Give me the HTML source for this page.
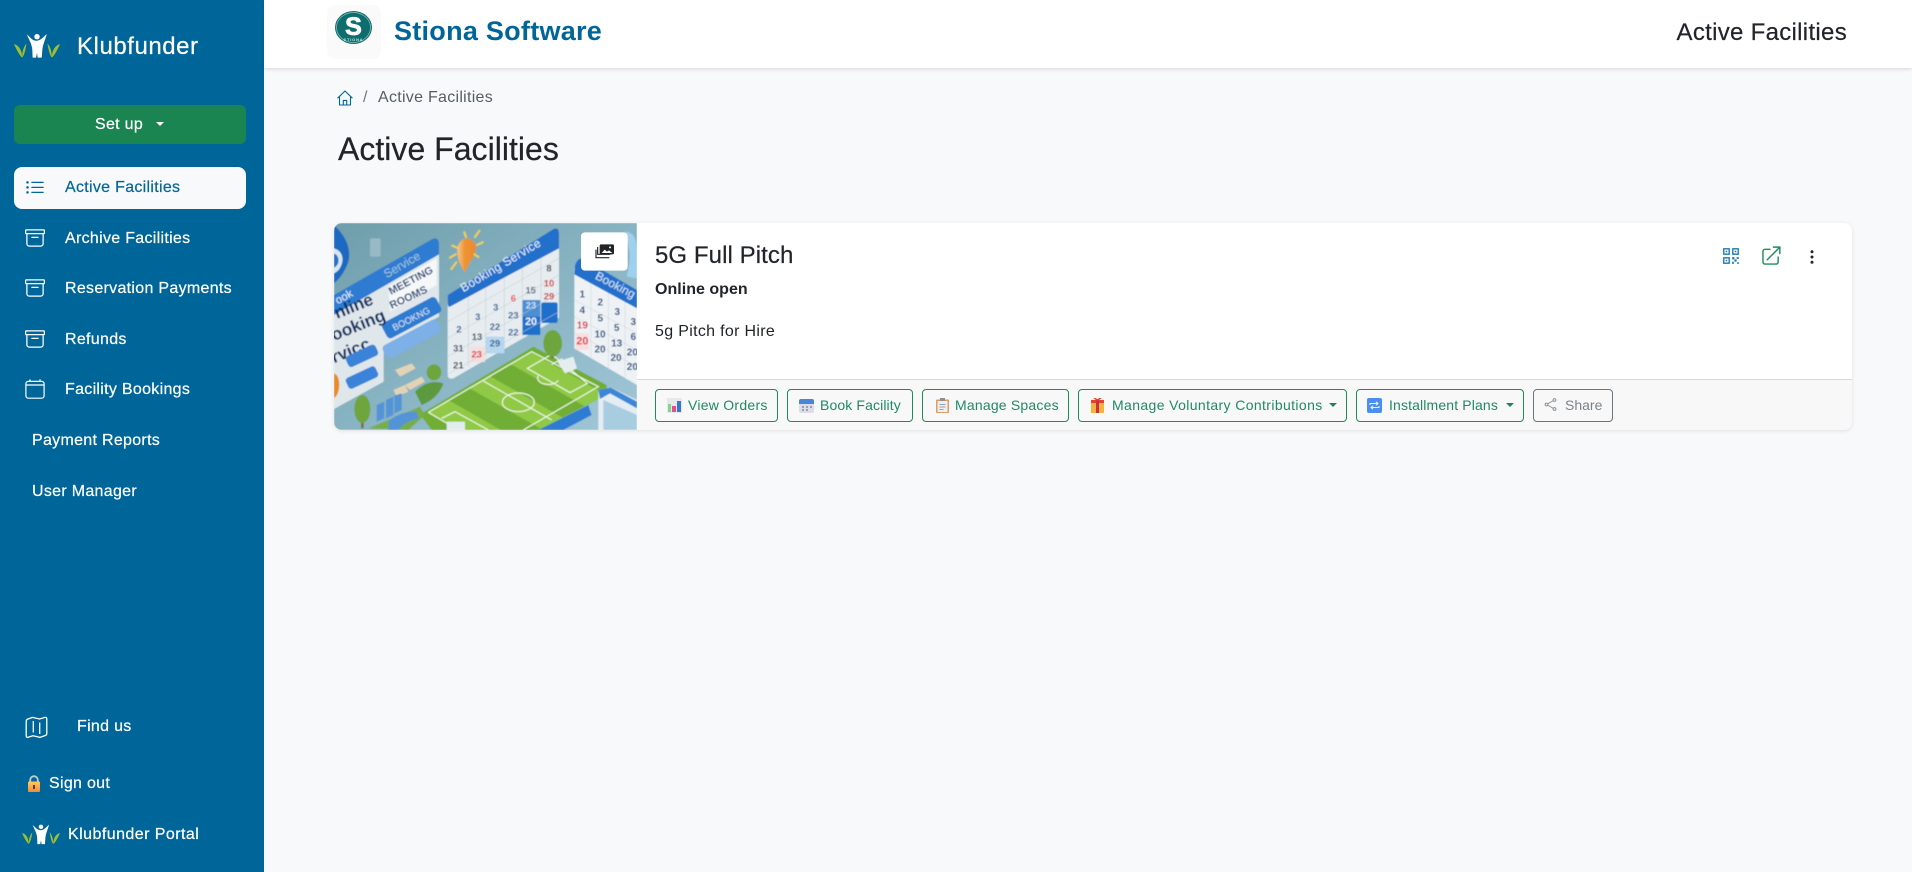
<!DOCTYPE html>
<html lang="en"><head><meta charset="utf-8"><title>Active Facilities</title>
<style>
*{box-sizing:border-box}
html,body{margin:0;padding:0;width:1912px;height:872px;overflow:hidden;background:#f8f9fa;font-family:"Liberation Sans",sans-serif;color:#212529}
.a{position:absolute;white-space:nowrap}
#side{position:absolute;left:0;top:0;width:264px;height:872px;background:#006699}
.m{position:absolute;color:#fff;font-size:16px;letter-spacing:.3px;line-height:20px;white-space:nowrap;-webkit-text-stroke:.2px currentColor}
.i{position:absolute;fill:#fff}
#top{position:absolute;left:264px;top:0;width:1648px;height:68px;background:#fff;box-shadow:0 1px 4px rgba(0,0,0,.14)}
#card{position:absolute;left:334px;top:223px;width:1518px;height:207px;background:#fff;border-radius:8px;box-shadow:0 1px 4px rgba(0,0,0,.1)}
#foot{position:absolute;left:303px;top:156px;width:1215px;height:51px;background:#f8f8f8;border-top:1px solid #d8d8d8;border-radius:0 0 8px 0}
.b{position:absolute;top:389px;height:33px;border:1px solid #1f8a5b;border-radius:4px;color:#1f8a66;font-size:14px;letter-spacing:.26px;line-height:31px;white-space:nowrap}
.b svg{position:absolute;left:11px;top:8px}
.b span{position:absolute;top:0}
.c{position:absolute;top:13px;width:0;height:0;border-left:4px solid transparent;border-right:4px solid transparent;border-top:4.5px solid #198754}
</style></head><body>
<div id="side">
<svg class="a" style="left:14px;top:33px" width="46" height="26" viewBox="42 100 136 75"><g fill="#9dbf35"><path d="M42 132C55 135 66 148 66 172C59 166 50 150 42 132Z"/><path d="M79 130C72 138 66 150 66 172C72 165 76 150 79 130Z"/><path d="M178 132C165 135 154 148 154 172C161 166 170 150 178 132Z"/><path d="M141 130C148 138 154 150 154 172C148 165 144 150 141 130Z"/></g><circle cx="110" cy="110" r="8" fill="#fff"/><path d="M80 103C90 112 97 122 108 122C120 122 128 112 139 102C134 120 128 132 126 146L124 172H112L110 158L107 172H97L96 146C94 130 86 118 80 103Z" fill="#fff"/></svg>
<div class="m" style="left:77px;top:33px;font-size:24px;line-height:27px;letter-spacing:.55px">Klubfunder</div>
<div class="a" style="left:14px;top:105px;width:232px;height:39px;background:#1b8551;border-radius:6px"></div>
<div class="m" style="left:95px;top:115px">Set up</div>
<div class="a" style="left:156px;top:122px;width:0;height:0;border-left:4.5px solid transparent;border-right:4.5px solid transparent;border-top:4.5px solid #fff"></div>
<div class="a" style="left:14px;top:167px;width:232px;height:42px;background:#f8f9fa;border-radius:8px"></div>
<svg class="i" style="left:25px;top:178px;fill:#006699" width="20" height="20" viewBox="0 0 16 16"><path fill-rule="evenodd" d="M5 11.5a.5.5 0 0 1 .5-.5h9a.5.5 0 0 1 0 1h-9a.5.5 0 0 1-.5-.5m0-4a.5.5 0 0 1 .5-.5h9a.5.5 0 0 1 0 1h-9a.5.5 0 0 1-.5-.5m0-4a.5.5 0 0 1 .5-.5h9a.5.5 0 0 1 0 1h-9a.5.5 0 0 1-.5-.5m-3 1a1 1 0 1 0 0-2 1 1 0 0 0 0 2m0 4a1 1 0 1 0 0-2 1 1 0 0 0 0 2m0 4a1 1 0 1 0 0-2 1 1 0 0 0 0 2"/></svg>
<div class="m" style="left:65px;top:178px;color:#006699">Active Facilities</div>
<svg class="i" style="left:25px;top:228px" width="20" height="20" viewBox="0 0 16 16"><path fill-rule="evenodd" d="M0 2a1 1 0 0 1 1-1h14a1 1 0 0 1 1 1v2a1 1 0 0 1-1 1v7.5a2.5 2.5 0 0 1-2.5 2.5h-9A2.5 2.5 0 0 1 1 12.5V5a1 1 0 0 1-1-1zm2 3v7.5A1.5 1.5 0 0 0 3.5 14h9a1.5 1.5 0 0 0 1.5-1.5V5zm13-3H1v2h14zM5 7.5a.5.5 0 0 1 .5-.5h5a.5.5 0 0 1 0 1h-5a.5.5 0 0 1-.5-.5"/></svg>
<div class="m" style="left:65px;top:229px">Archive Facilities</div>
<svg class="i" style="left:25px;top:278px" width="20" height="20" viewBox="0 0 16 16"><path fill-rule="evenodd" d="M0 2a1 1 0 0 1 1-1h14a1 1 0 0 1 1 1v2a1 1 0 0 1-1 1v7.5a2.5 2.5 0 0 1-2.5 2.5h-9A2.5 2.5 0 0 1 1 12.5V5a1 1 0 0 1-1-1zm2 3v7.5A1.5 1.5 0 0 0 3.5 14h9a1.5 1.5 0 0 0 1.5-1.5V5zm13-3H1v2h14zM5 7.5a.5.5 0 0 1 .5-.5h5a.5.5 0 0 1 0 1h-5a.5.5 0 0 1-.5-.5"/></svg>
<div class="m" style="left:65px;top:279px">Reservation Payments</div>
<svg class="i" style="left:25px;top:329px" width="20" height="20" viewBox="0 0 16 16"><path fill-rule="evenodd" d="M0 2a1 1 0 0 1 1-1h14a1 1 0 0 1 1 1v2a1 1 0 0 1-1 1v7.5a2.5 2.5 0 0 1-2.5 2.5h-9A2.5 2.5 0 0 1 1 12.5V5a1 1 0 0 1-1-1zm2 3v7.5A1.5 1.5 0 0 0 3.5 14h9a1.5 1.5 0 0 0 1.5-1.5V5zm13-3H1v2h14zM5 7.5a.5.5 0 0 1 .5-.5h5a.5.5 0 0 1 0 1h-5a.5.5 0 0 1-.5-.5"/></svg>
<div class="m" style="left:65px;top:330px">Refunds</div>
<svg class="i" style="left:25px;top:379px;fill:none;stroke:#fff" width="20" height="20" viewBox="0 0 20 20" stroke-width="1.2"><rect x=".9" y="2.4" width="18.2" height="16.8" rx="2.4"/><path d="M1 6h18M5 .4v2M15 .4v2" /></svg>
<div class="m" style="left:65px;top:380px">Facility Bookings</div>
<div class="m" style="left:32px;top:431px">Payment Reports</div>
<div class="m" style="left:32px;top:482px">User Manager</div>
<svg class="i" style="left:25px;top:716px;fill:none;stroke:#fff" width="23" height="23" viewBox="0 0 23 23" stroke-width="1.3" stroke-linejoin="round"><path d="M1.2 5.5Q1.2 3.5 3 3L7.5 1.4 14.500 3 20 1.400Q21.800 1.200 21.800 3V17.500Q21.800 19 20.300 19.500L15 21.400 8 19.700 3 21.300Q1.200 21.600 1.200 20Z"/><path d="M8.300 5V16.500M14.700 6.500V18"/></svg>
<div class="m" style="left:77px;top:717px">Find us</div>
<svg class="a" style="left:27px;top:775px" width="14" height="17" viewBox="0 0 14 17"><defs><linearGradient id="lk" x1="0" y1="0" x2="0" y2="1"><stop offset="0" stop-color="#ffc95a"/><stop offset="1" stop-color="#f58a3c"/></linearGradient></defs><path d="M3.200 8V5a3.800 3.800 0 0 1 7.600 0v3" fill="none" stroke="#c5c8cc" stroke-width="1.800"/><rect x="1" y="6.500" width="12" height="10.500" rx="1" fill="url(#lk)"/><rect x="6" y="10" width="2" height="4" fill="#5a3a4a"/></svg>
<div class="m" style="left:49px;top:774px">Sign out</div>
<svg class="a" style="left:22px;top:824px" width="38" height="21" viewBox="42 100 136 75"><g fill="#9dbf35"><path d="M42 132C55 135 66 148 66 172C59 166 50 150 42 132Z"/><path d="M79 130C72 138 66 150 66 172C72 165 76 150 79 130Z"/><path d="M178 132C165 135 154 148 154 172C161 166 170 150 178 132Z"/><path d="M141 130C148 138 154 150 154 172C148 165 144 150 141 130Z"/></g><circle cx="110" cy="110" r="8" fill="#fff"/><path d="M80 103C90 112 97 122 108 122C120 122 128 112 139 102C134 120 128 132 126 146L124 172H112L110 158L107 172H97L96 146C94 130 86 118 80 103Z" fill="#fff"/></svg>
<div class="m" style="left:68px;top:825px;letter-spacing:.45px">Klubfunder Portal</div>
</div>

<div id="top">
<div class="a" style="left:63px;top:5px;width:54px;height:54px;background:#fafafa;border-radius:8px"></div>
<svg class="a" style="left:71px;top:11px" width="37" height="33" viewBox="0 0 37 33"><ellipse cx="18.500" cy="16.500" rx="18.500" ry="16.500" fill="#0e6e6e"/><ellipse cx="18.500" cy="16.500" rx="17" ry="15" fill="none" stroke="#8fc0bd" stroke-width=".7"/><text x="18.500" y="24" text-anchor="middle" font-family="Liberation Sans,sans-serif" font-size="25" font-weight="700" fill="#fff" stroke="#fff" stroke-width=".8">S</text><text x="18.500" y="30" text-anchor="middle" font-family="Liberation Sans,sans-serif" font-size="4" font-weight="700" letter-spacing=".8" fill="#cfe5e3">STIONA</text></svg>
<div class="a" style="left:130px;top:15px;font-size:27px;line-height:32px;font-weight:700;color:#006699;letter-spacing:.27px">Stiona Software</div>
<div class="a" style="right:65px;top:20px;font-size:24px;line-height:26px;color:#212529;letter-spacing:.3px;-webkit-text-stroke:.2px #212529">Active Facilities</div>
</div>

<svg class="a" style="left:337px;top:90px" width="16" height="16" viewBox="0 0 16 16" fill="none" stroke="#006699" stroke-width="1.1" stroke-linejoin="round"><path d="M.6 8.200 8 1l7.400 7.200M2.500 6.800V15h11V6.800M6.300 15v-4.600h3.400V15"/></svg>
<div class="a" style="left:363px;top:88px;font-size:16px;line-height:20px;color:#6c757d">/</div>
<div class="a" style="left:378px;top:88px;font-size:16px;line-height:20px;color:#565e64;letter-spacing:.28px">Active Facilities</div>
<div class="a" style="left:338px;top:131px;font-size:32px;line-height:36px;letter-spacing:.02px;color:#212529;-webkit-text-stroke:.2px #212529">Active Facilities</div>

<div id="card">
<div id="foot"></div>
<svg class="a" style="left:0;top:0;border-radius:8px 0 0 8px" width="303" height="207" viewBox="27 24 909 621">
<defs><linearGradient id="bg" x1="0" y1="0" x2="1" y2="1"><stop offset="0" stop-color="#6f9eab"/><stop offset=".5" stop-color="#88b3c2"/><stop offset="1" stop-color="#a0c7d8"/></linearGradient><linearGradient id="bulb" x1="0" y1="0" x2="1" y2="0"><stop offset="0" stop-color="#f5c88a"/><stop offset=".4" stop-color="#ee9433"/><stop offset="1" stop-color="#e88a2c"/></linearGradient><clipPath id="ck"><rect x="27" y="24" width="909" height="621"/></clipPath><clipPath id="pc"><path d="M285 598 625 395 845 510 845 540 640 645H320Z"/></clipPath><filter id="sf"><feGaussianBlur stdDeviation="1.2"/></filter></defs>
<g clip-path="url(#ck)" font-family="Liberation Sans,sans-serif" font-weight="700"><g filter="url(#sf)">
<rect x="27" y="24" width="909" height="621" fill="url(#bg)"/>
<path d="M27 30C60 60 80 100 70 140C60 170 45 190 27 205Z" fill="#1d69c2"/><path d="M27 100C45 105 55 120 52 140C48 160 38 170 27 175Z" fill="#d5e6ee"/><path d="M27 115C38 120 42 130 40 142C38 150 32 156 27 158Z" fill="#2a6fc4"/>
<rect x="135" y="70" width="32" height="55" rx="5" fill="#97bac5"/>
<path d="M900 50Q936 50 936 110V190L905 185Q925 110 900 70Z" fill="#9fd0ee"/>
<path d="M27 262 320 85 342 90V305L176 398V500L27 582Z" fill="#dfe7eb"/>
<path d="M27 240 322 72Q340 65 342 85V118L27 300Z" fill="#2f7bd2"/>
<text transform="translate(38 268) rotate(-28)" font-size="34" fill="#e9f2fa" font-weight="400">ook</text>
<text transform="translate(185 190) rotate(-30)" font-size="36" fill="#9fc4dd" font-weight="400">Service</text>
<path d="M190 215 335 130V210L195 290Z" fill="#f5f7f8"/>
<text transform="translate(198 240) rotate(-28)" font-size="32" fill="#214a78">MEETING</text>
<text transform="translate(200 282) rotate(-25)" font-size="32" fill="#214a78">ROOMS</text>
<rect x="168" y="282" width="184" height="52" rx="12" transform="rotate(-28 260 308)" fill="#2f7bd2"/>
<text transform="translate(208 348) rotate(-27)" font-size="28" fill="#d3e6f6" font-weight="400">BOOKNG</text>
<rect x="168" y="350" width="184" height="44" rx="12" transform="rotate(-28 260 372)" fill="#7bb0e6"/>
<text transform="translate(36 312) rotate(-22)" font-size="52" fill="#0e2c5e">nline</text>
<text transform="translate(27 378) rotate(-22)" font-size="52" fill="#0e2c5e">ooking</text>
<text transform="translate(27 445) rotate(-22)" font-size="52" fill="#0e2c5e">rvicc</text>
<rect x="62" y="405" width="98" height="36" rx="10" transform="rotate(-25 110 423)" fill="#3b83d8"/>
<rect x="62" y="470" width="98" height="36" rx="10" transform="rotate(-25 110 488)" fill="#3b83d8"/>
<path d="M27 475C48 480 48 535 27 550Z" fill="#e88a2c"/>
<path d="M425 70C450 72 458 95 450 115C442 135 432 142 420 172C408 155 396 130 397 105C398 85 408 72 425 70Z" fill="url(#bulb)"/>
<g stroke="#f2cf4a" stroke-width="6" stroke-linecap="round"><path d="M375 128 392 118M382 92 396 98M418 52 423 66M463 47 450 66M473 82 456 90M460 126 448 118M379 162 394 142"/></g>
<path d="M368 240 685 42Q702 35 702 55V308L385 490Q368 495 368 478Z" fill="#e6ecef"/>
<rect x="592" y="255" width="54" height="55" fill="#4c8fd2"/><rect x="592" y="305" width="54" height="55" fill="#1e70cc"/><rect x="648" y="262" width="50" height="62" rx="6" fill="#1e70cc"/><rect x="482" y="365" width="56" height="50" fill="#b5d7ef"/><rect x="436" y="395" width="44" height="46" fill="#f6dede"/>
<g stroke="#c0cad2" stroke-width="1.500" fill="none"><path d="M430 200V455M482 170V425M538 135V395M592 100V365M648 70V330"/><path d="M368 320 702 130M368 370 702 180M368 425 702 235M368 478 702 290"/></g>
<path d="M368 240 685 42Q702 35 702 55V100L373 276Q368 276 368 260Z" fill="#2370cc"/>
<text transform="translate(415 232) rotate(-31)" font-size="36" fill="#e7f1fa" letter-spacing="1" font-weight="400">Booking Service</text>
<g font-size="28" fill="#2a5a94" text-anchor="middle"><text x="512" y="287">3</text><text x="402" y="352">2</text><text x="458" y="315">3</text><text x="510" y="345">22</text><text x="565" y="310">23</text><text x="617" y="235" fill="#5a6a7a">15</text><text x="565" y="362">22</text><text x="400" y="410" fill="#3c4a5e">31</text><text x="456" y="375" fill="#3c4a5e">13</text><text x="510" y="395">29</text><text x="400" y="460" fill="#3c3c4a">21</text><text x="455" y="427" fill="#d72f3e">23</text><text x="672" y="170" fill="#3c3c4a">8</text><text x="672" y="215" fill="#d72f3e">10</text><text x="672" y="253" fill="#c93344">29</text><text x="565" y="260" fill="#e94a50">6</text><text x="618" y="280" fill="#c9e0f4">23</text><text x="618" y="330" fill="#e9f2fa" font-size="32">20</text></g>
<path d="M748 160 936 255V510L748 400Z" fill="#eef2f5"/>
<g stroke="#c5d2da" stroke-width="1.500" fill="none"><path d="M798 190V430M850 220V460M900 250V490M748 255 936 355M748 305 936 405M748 352 936 455"/></g>
<path d="M750 150Q760 125 775 132L936 225V280L748 178Z" fill="#2370cc"/>
<text transform="translate(808 190) rotate(28)" font-size="36" fill="#d7e7f6" font-weight="400">Booking</text>
<rect x="752" y="355" width="40" height="50" fill="#f6dfe0"/>
<g font-size="30" fill="#204c80" text-anchor="middle"><text x="772" y="247">1</text><text x="826" y="272">2</text><text x="877" y="300">3</text><text x="925" y="330">3</text><text x="772" y="295">4</text><text x="826" y="320">5</text><text x="875" y="348">5</text><text x="925" y="375">6</text><text x="825" y="367">10</text><text x="875" y="395">13</text><text x="922" y="422">20</text><text x="825" y="412">20</text><text x="873" y="438">20</text><text x="922" y="465">20</text><text x="772" y="340" fill="#d8323f">19</text><text x="772" y="388" font-size="32" fill="#e2303a">20</text></g>
<path d="M285 598 625 395 845 510 845 540 640 645H320Z" fill="#6fae36"/>
<g clip-path="url(#pc)" fill="#8fc944"><path d="M310 592 372 556 772 784 710 820ZM434 520 496 484 896 712 834 748ZM558 448 620 412 1020 640 958 676ZM186 664 248 628 648 856 586 892Z"/></g>
<path d="M310 592 620 410 820 515 595 645M475 498 680 615M607 460 680 418 787 505 735 533ZM532 562a48 28 0 1 0 96 0a48 28 0 1 0 -96 0M640 482a30 18 0 0 0 60 14M680 448 710 432 745 470M310 592 400 645M350 610 390 590 490 645" fill="none" stroke="#eef6e0" stroke-width="3.500"/>
<path d="M697 440 745 425 756 460 720 475Z" fill="#e6edf0"/>
<rect x="365" y="620" width="55" height="25" fill="#e3ecef"/>
<rect x="678" y="405" width="8" height="25" fill="#8a6a4a"/><ellipse cx="683" cy="385" rx="28" ry="40" fill="#6ea63e"/>
<rect x="108" y="610" width="8" height="30" fill="#8a6a4a"/><ellipse cx="112" cy="582" rx="24" ry="42" fill="#6ea63e"/>
<ellipse cx="327" cy="472" rx="22" ry="24" fill="#6ea63e"/><path d="M270 530Q310 490 355 505 340 550 290 570Z" fill="#5c9a3c"/>
<path d="M210 465 260 445 272 460 225 485ZM240 510 290 485 300 500 255 525ZM205 525 240 510 250 530 215 545Z" fill="#e3d3b5"/>
<path d="M130 640 285 575 300 600 250 645Z" fill="#78ae48"/>
<path d="M155 570 178 560V610L155 620ZM183 555 205 545V600L183 610ZM208 542 230 535V585L208 595ZM190 620Q220 590 275 590L280 612Q235 620 222 645H190Z" fill="#5394d6"/>
<path d="M820 525 860 518 936 555V645H820Z" fill="#e3edf2"/><path d="M820 525 858 518 936 560V580L855 535 825 552Z" fill="#3a86d6"/><path d="M835 555 936 600V645H835Z" fill="#a9cde0"/><path d="M640 645 790 570 800 600 715 645Z" fill="#2f7bd2"/>
</g>
<rect x="768" y="52" width="140" height="115" rx="12" fill="#fff"/>
<rect x="824" y="88" width="43" height="30" rx="4" fill="#212529"/><path d="M830 114l9-10 7 6 6-4 10 8z" fill="#fff"/><circle cx="855" cy="97" r="3" fill="#fff"/>
<path d="M818 96v22h38M813 104v24h40" fill="none" stroke="#212529" stroke-width="3.500"/>
</g></svg>
<div class="a" style="left:321px;top:19px;font-size:24px;line-height:28px;letter-spacing:.08px;color:#212529;-webkit-text-stroke:.2px #212529">5G Full Pitch</div>
<div class="a" style="left:321px;top:57px;font-size:16px;line-height:20px;font-weight:700;color:#212529;letter-spacing:.02px">Online open</div>
<div class="a" style="left:321px;top:99px;font-size:16px;line-height:20px;color:#212529;letter-spacing:.32px">5g Pitch for Hire</div>
<svg class="a" style="left:1388px;top:24px" width="18" height="18" viewBox="0 0 16 16" fill="#1d78ad"><path fill-rule="evenodd" d="M1 1h6v6H1zm1.200 1.200v3.600h3.600V2.200zM9 1h6v6H9zm1.200 1.200v3.600h3.600V2.200zM1 9h6v6H1zm1.200 1.200v3.600h3.600v-3.600z"/><path d="M3.300 3.300h1.400v1.400H3.300zM11.300 3.300h1.400v1.400h-1.400zM3.300 11.300h1.400v1.400H3.300zM9 9h2v2H9zM13 9h2v1.500h-2zM11 11h2v2h-2zM9 13h1.500v2H9zM13.500 13.500H15V15h-1.500z"/></svg>
<svg class="a" style="left:1428px;top:23px" width="19" height="19" viewBox="0 0 20 20" fill="none" stroke="#1b8f5a" stroke-width="1.500"><path d="M9 3.500H3a2 2 0 0 0-2 2V17a2 2 0 0 0 2 2h12a2 2 0 0 0 2-2v-6"/><path d="M5.500 14.500 18.500 1.500M12 1.200h6.800V8" stroke-linecap="round"/></svg>
<svg class="a" style="left:1476px;top:27px" width="4" height="14" viewBox="0 0 4 14" fill="#212529"><circle cx="2" cy="1.700" r="1.500"/><circle cx="2" cy="7" r="1.500"/><circle cx="2" cy="12.300" r="1.500"/></svg>
</div>

<div class="b" style="left:655px;width:123px"><svg style="left:11px" width="15" height="15" viewBox="0 0 15 15"><rect width="15" height="15" fill="#e6e8ec"/><rect x="1" y="6" width="3" height="8" fill="#7fd48e"/><rect x="5" y="8" width="4" height="6" fill="#ea4c89"/><rect x="10" y="3" width="4" height="11" fill="#3478d6"/></svg><span style="left:32px">View Orders</span></div>
<div class="b" style="left:787px;width:126px"><svg width="15" height="15" viewBox="0 0 15 15"><rect y="1" width="15" height="14" rx="2" fill="#dcdde8"/><path d="M0 3a2 2 0 0 1 2-2h11a2 2 0 0 1 2 2v3H0z" fill="#4a86d8"/><path d="M3 8h2v2H3zM7 8h2v2H7zM11 8h2v2h-2zM3 11h2v2H3zM7 11h2v2H7z" fill="#9aa0b4"/></svg><span style="left:32px;letter-spacing:.12px">Book Facility</span></div>
<div class="b" style="left:922px;width:147px"><svg style="left:13px" width="13" height="15" viewBox="0 0 13 15"><rect x="0" y="1.500" width="13" height="13.500" rx="1" fill="#e09a62"/><rect x="1.500" y="3" width="10" height="11" fill="#eceff3"/><rect x="4" y="0" width="5" height="3" fill="#8a8f9a"/><path d="M3.500 6h6v1h-6zM3.500 8.500h6v1h-6zM3.500 11h4v1h-4z" fill="#9aa0ac"/></svg><span style="left:32px;letter-spacing:.2px">Manage Spaces</span></div>
<div class="b" style="left:1078px;width:269px"><svg style="left:12px" width="13" height="15" viewBox="0 0 13 15"><rect y="4" width="13" height="11" fill="#f5b23c"/><rect y="2" width="13" height="3" fill="#e0442c"/><rect x="5" y="2" width="3" height="13" fill="#c8304a"/><path d="M6.500 2 3 0M6.500 2 10 0" stroke="#e0442c" stroke-width="1.500"/></svg><span style="left:33px;letter-spacing:.38px">Manage Voluntary Contributions</span><i class="c" style="left:250px"></i></div>
<div class="b" style="left:1356px;width:168px"><svg style="left:10px" width="15" height="15" viewBox="0 0 15 15"><rect width="15" height="15" rx="2" fill="#4b8df0"/><path d="M3 7V5.500h7.500M9 3.800l2 1.700-2 1.700M12 8v1.500H4.500M6 7.800 4 9.500l2 1.700" fill="none" stroke="#e4efff" stroke-width="1.100"/></svg><span style="left:32px;letter-spacing:.14px">Installment Plans</span><i class="c" style="left:149px"></i></div>
<div class="b" style="left:1533px;width:80px;border-color:#6c757d;color:#7b838a"><svg style="left:10px" width="13" height="13" viewBox="0 0 13 13" fill="none" stroke="#8b9298"><path d="M10.500 2 2.500 6.500l8 4.500"/><circle cx="10.500" cy="2" r="1.400" fill="#f8f8f8"/><circle cx="2.500" cy="6.500" r="1.400" fill="#f8f8f8"/><circle cx="10.500" cy="11" r="1.400" fill="#f8f8f8"/></svg><span style="left:31px;letter-spacing:0">Share</span></div>
</body></html>
